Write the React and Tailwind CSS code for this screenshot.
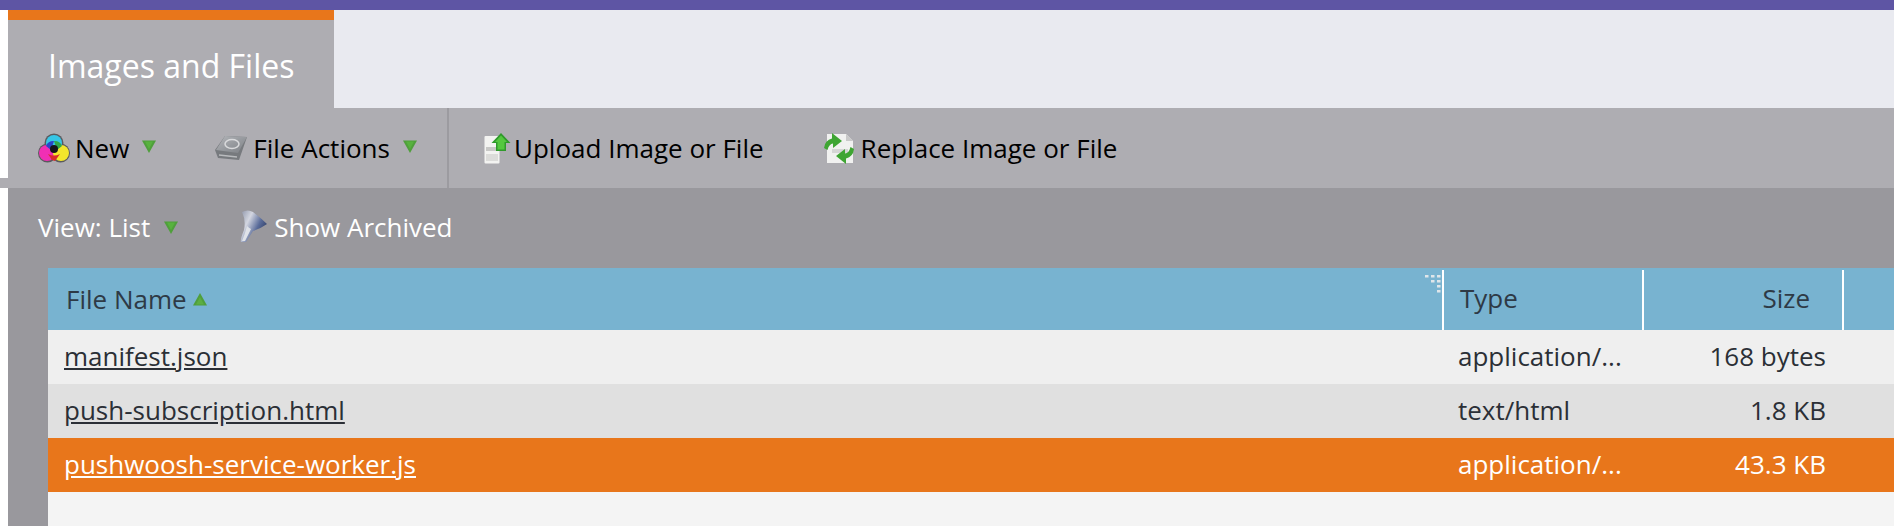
import { useId } from 'react';

const files = [
  { name: 'manifest.json', type: 'application/...', size: '168 bytes', row: 'bg-[#efefef] text-[#2b2f36]' },
  { name: 'push-subscription.html', type: 'text/html', size: '1.8 KB', row: 'bg-[#e0e0e0] text-[#2b2f36]' },
  { name: 'pushwoosh-service-worker.js', type: 'application/...', size: '43.3 KB', row: 'bg-[#e8761b] text-white' },
];

function DropArrow({ className = '' }) {
  return (
    <svg viewBox="0 0 14 13" className={`h-[13px] w-[14px] shrink-0 blur-[0.4px] ${className}`}>
      <path d="M0 0.500 L14 0.500 L7 13 Z" fill="#4f9f3b" />
      <path d="M3 1.500 L11 1.500 L7 9 Z" fill="#58b23e" />
    </svg>
  );
}

function SortArrow() {
  return (
    <svg viewBox="0 0 14 13" className="ml-[6px] mt-[2px] h-[13px] w-[14px] blur-[0.4px]">
      <path d="M7 0 L14 12.500 L0 12.500 Z" fill="#4f9f3b" />
      <path d="M7 4 L11 11.500 L3 11.500 Z" fill="#5cae42" />
    </svg>
  );
}

function ColorsIcon() {
  return (
    <svg viewBox="0 0 32 30" className="h-[30px] w-[32px] shrink-0 blur-[0.5px]">
      <circle cx="16" cy="10" r="9.500" fill="#5a5a5e" />
      <circle cx="9.500" cy="20" r="9.500" fill="#5a5a5e" />
      <circle cx="22.500" cy="20" r="9.500" fill="#5a5a5e" />
      <circle cx="16" cy="10" r="8" fill="#35c6e6" />
      <circle cx="9" cy="20" r="8" fill="#f02fb4" />
      <circle cx="23" cy="20" r="8" fill="#f3e62c" />
      <path d="M16 8 A8 8 0 0 1 24 13 L19 17 Z" fill="#2fa84a" />
      <path d="M16 8 A8 8 0 0 0 8 13 L13 17 Z" fill="#2a45c8" />
      <path d="M10 21 Q16 24 22 21 L17 28 L14 27 Z" fill="#d92b2b" />
      <circle cx="16" cy="16" r="4" fill="#15151a" />
    </svg>
  );
}

function DiskIcon() {
  const id = useId();
  return (
    <svg viewBox="0 0 33 26" className="h-[26px] w-[33px] shrink-0 blur-[0.5px]">
      <defs>
        <linearGradient id={id} x1="0" y1="0" x2="1" y2="1">
          <stop offset="0" stopColor="#b4b6ba" />
          <stop offset="1" stopColor="#7b7f84" />
        </linearGradient>
      </defs>
      <path d="M10 1 L32 2 L24 25 L3 23 L0 15 Z" fill="#777a7e" />
      <path d="M10 1 L32 2 L23 18 L1 15 Z" fill={`url(#${id})`} />
      <ellipse cx="17" cy="9" rx="7" ry="4.500" fill="none" stroke="#d9dadc" strokeWidth="1.500" />
      <path d="M4 20 L22 22" stroke="#b9bbbe" strokeWidth="1.500" />
    </svg>
  );
}

function UploadIcon() {
  return (
    <svg viewBox="0 0 27 31" className="h-[31px] w-[27px] shrink-0 blur-[0.4px]">
      <rect x="0.500" y="3" width="15" height="27.500" rx="1" fill="#f3f3f1" />
      <rect x="2" y="14" width="12" height="4" fill="#c8c8c6" />
      <rect x="2" y="21" width="12" height="7" fill="#dcdcda" />
      <path d="M17 0 L26.500 10 L22 10 L22 18 L12 18 L12 10 L7.500 10 Z" fill="#2f9a2b" />
      <path d="M17 2.500 L23 9 L20.500 9 L20.500 16.500 L13.500 16.500 L13.500 9 L11 9 Z" fill="#54c83f" />
    </svg>
  );
}

function ReplaceIcon() {
  const arrow = 'M0 15 Q1 7 8 5.500 L8 0 L18 8 L9 15 L9 10.500 Q5 11 3.500 17 Z';
  return (
    <svg viewBox="0 0 30 31" className="h-[31px] w-[30px] shrink-0 blur-[0.4px]">
      <path d="M3 1 L22 1 L29 8 L29 30 L3 30 Z" fill="#f1f1f0" />
      <path d="M22 1 L29 8 L22 8 Z" fill="#c9c9c9" />
      <path d="M8 16 L24 16 L24 20 L8 20 Z" fill="#d6d6d6" />
      <path d={arrow} fill="#3fa533" />
      <path d={arrow} fill="#3fa533" transform="rotate(180 15 15.500)" />
    </svg>
  );
}

function FunnelIcon() {
  const id = useId();
  return (
    <svg viewBox="0 0 28 33" className="h-[33px] w-[28px] shrink-0 blur-[0.5px]">
      <defs>
        <linearGradient id={id} x1="0" y1="0" x2="1" y2="0.600">
          <stop offset="0" stopColor="#8f96aa" />
          <stop offset="0.35" stopColor="#d3d6e0" />
          <stop offset="0.7" stopColor="#5a6c9a" />
          <stop offset="1" stopColor="#2e3d66" />
        </linearGradient>
      </defs>
      <path d="M2 2 Q8 -1 13 2 Q21 8 27 14 Q20 19 13 21 L6 32 L1 32 Q0 30 4 20 Q6 10 2 2 Z" fill={`url(#${id})`} />
      <path d="M7 16 Q5 24 2 31 L5 31 L11 19 Q9 18 7 16 Z" fill="#dfe2e8" />
    </svg>
  );
}

function ResizeGrip() {
  const dots = [[0, 0], [6, 0], [12, 0], [6, 5], [12, 5], [12, 10], [12, 15]];
  return (
    <svg viewBox="0 0 16 18" className="absolute right-px top-[5px] h-[18px] w-4 blur-[0.3px]">
      {dots.map(([x, y]) => (
        <rect key={`${x}-${y}`} x={x} y={y} width="3.500" height="2.500" fill="#dfe6ea" />
      ))}
    </svg>
  );
}

export default function App() {
  return (
    <div className="flex h-[526px] w-full flex-col overflow-hidden bg-white font-['Open_Sans',sans-serif]">
      <div className="h-[10px] shrink-0 bg-[#5e55a4]"></div>

      <div className="flex min-h-0 flex-1">
        {/* white strip on the left, the toolbar pokes through it */}
        <div className="flex w-2 shrink-0 flex-col">
          <div className="h-[168px]"></div>
          <div className="h-[10px] bg-[#aeadb2]"></div>
        </div>

        <div className="flex min-w-0 flex-1 flex-col">
          {/* Tabs */}
          <div className="flex h-[98px] shrink-0 bg-[#e9eaf0]">
            <div className="w-[326px] border-t-[10px] border-[#e8761b] bg-[#aeadb2] pl-[40px] pt-[26px] text-[32px] leading-[40px] text-white">
              Images and Files
            </div>
          </div>

          {/* Toolbar */}
          <div className="flex h-[80px] shrink-0 items-center bg-[#aeadb2] text-[26px] text-black">
            <div className="flex h-full w-[441px] items-center border-r-2 border-[#9c9ba0] pl-[30px]">
              <ColorsIcon />
              <span className="ml-[5px]">New</span>
              <DropArrow className="mb-[3px] ml-[13px]" />
              <div className="ml-[59px]">
                <DiskIcon />
              </div>
              <span className="ml-[5px]">File Actions</span>
              <DropArrow className="mb-[3px] ml-[13px]" />
            </div>
            <div className="ml-[35px] flex items-center">
              <UploadIcon />
              <span className="ml-[3px]">Upload Image or File</span>
            </div>
            <div className="ml-[60px] flex items-center">
              <ReplaceIcon />
              <span className="ml-[7px]">Replace Image or File</span>
            </div>
          </div>

          {/* Filter bar and table */}
          <div className="flex min-h-0 flex-1 flex-col bg-[#99989d]">
            <div className="flex h-[80px] shrink-0 items-start pl-[30px] pt-[14px] text-[26px] leading-[50px] text-white">
              <span>View: List</span>
              <DropArrow className="ml-[14px] mt-[19px]" />
              <div className="ml-[62px] mt-[8px]">
                <FunnelIcon />
              </div>
              <span className="ml-[6px]">Show Archived</span>
            </div>

            <div className="ml-[40px] flex min-h-0 flex-1 flex-col bg-[#f4f4f4]">
              <div className="grid h-[62px] shrink-0 grid-cols-[1396px_200px_200px_1fr] bg-[#78b3d0] pt-[2px] text-[26px] leading-[56px] text-[#2e3a46]">
                <div className="relative flex items-center border-r-2 border-white pb-[3px] pl-[18px]">
                  File Name
                  <SortArrow />
                  <ResizeGrip />
                </div>
                <div className="border-r-2 border-white pl-[16px]">Type</div>
                <div className="border-r-2 border-white pr-[32px] text-right">Size</div>
                <div></div>
              </div>
              {files.map((f) => (
                <div key={f.name} className={`grid h-[54px] shrink-0 grid-cols-[1396px_200px_200px_1fr] text-[26px] leading-[52px] ${f.row}`}>
                  <div className="pl-[16px] underline">{f.name}</div>
                  <div className="pl-[14px]">{f.type}</div>
                  <div className="pr-[18px] text-right">{f.size}</div>
                  <div></div>
                </div>
              ))}
            </div>
          </div>
        </div>
      </div>
    </div>
  );
}
